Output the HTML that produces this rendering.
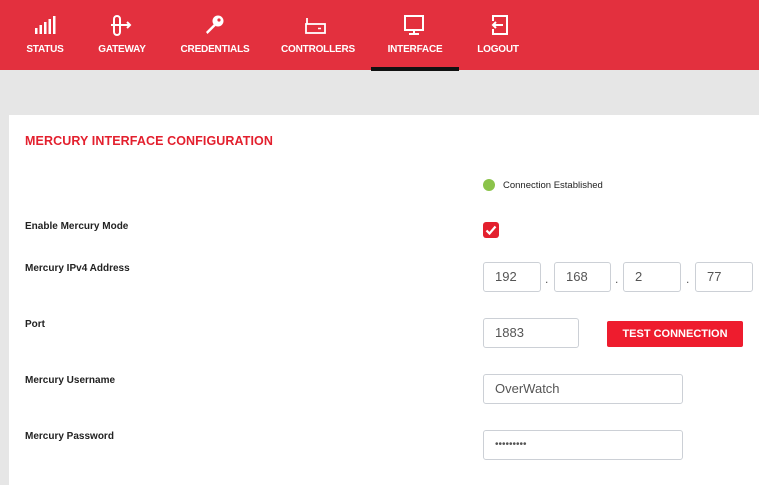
<!DOCTYPE html>
<html><head><style>
*{margin:0;padding:0;box-sizing:border-box}
body{width:759px;height:475px;overflow:hidden;background:#e6e6e6;font-family:"Liberation Sans",sans-serif;position:relative}
.hdr{position:absolute;left:0;top:0;width:759px;height:70px;background:#e3303e}
.nav{position:absolute;top:44px;color:#fff;font-size:10px;font-weight:bold;transform:translateX(-50%);white-space:nowrap;letter-spacing:-0.2px}
.ic{position:absolute;top:14px}
.under{position:absolute;left:371px;top:67px;width:88px;height:4px;background:#111}
.panel{position:absolute;left:9px;top:115px;width:760px;height:370px;background:#fff}
.t{position:absolute;left:25px;top:134px;color:#e3202e;font-size:12.5px;font-weight:bold;letter-spacing:0.1px}
.lb{position:absolute;left:25px;font-size:10px;font-weight:bold;color:#222}
.in{position:absolute;height:30px;border:1px solid #ccd0d6;border-radius:3px;background:#fff;font-size:13px;color:#555;padding-left:11px;line-height:28px}
.dot{position:absolute;font-size:12px;color:#555}
</style></head><body>
<div class="hdr"></div>
<svg class="ic" style="left:34px" width="22" height="22" viewBox="0 0 22 22" fill="#fff"><rect x="1" y="14" width="2.5" height="6"/><rect x="5.5" y="11" width="2.5" height="9"/><rect x="10" y="8" width="2.5" height="12"/><rect x="14.5" y="5" width="2.5" height="15"/><rect x="19" y="2" width="2.5" height="18"/></svg>
<svg class="ic" style="left:110px" width="24" height="22" viewBox="0 0 24 22" fill="none" stroke="#fff" stroke-width="2"><rect x="4" y="2" width="6" height="19" rx="3"/><path d="M1 11h19M17 8l3 3-3 3"/></svg>
<svg class="ic" style="left:203px" width="22" height="22" viewBox="0 0 22 22" fill="#fff"><circle cx="15" cy="7" r="5.5"/><path d="M11 10L3 18l1.5 2 8-8z"/><circle cx="16" cy="6" r="1.6" fill="#e3303e"/></svg>
<svg class="ic" style="left:303px" width="24" height="22" viewBox="0 0 24 22" fill="none" stroke="#fff" stroke-width="1.8"><path d="M4 4v6"/><rect x="3" y="10" width="19" height="9"/><path d="M15 14.5h3" stroke-width="1.5"/></svg>
<svg class="ic" style="left:402px" width="24" height="22" viewBox="0 0 24 22" fill="none" stroke="#fff" stroke-width="2"><rect x="3" y="2" width="18" height="14"/><path d="M12 16v3M7 20h10"/></svg>
<svg class="ic" style="left:487px" width="22" height="22" viewBox="0 0 22 22" fill="none" stroke="#fff" stroke-width="2"><path d="M6 7V2h14v18H6v-5"/><path d="M16 11H6M9 8l-3 3 3 3"/></svg>
<div class="nav" style="left:45px">STATUS</div>
<div class="nav" style="left:122px">GATEWAY</div>
<div class="nav" style="left:215px">CREDENTIALS</div>
<div class="nav" style="left:318px">CONTROLLERS</div>
<div class="nav" style="left:415px">INTERFACE</div>
<div class="nav" style="left:498px">LOGOUT</div>
<div class="under"></div>
<div class="panel"></div>
<div class="t">MERCURY INTERFACE CONFIGURATION</div>
<div style="position:absolute;left:483px;top:179px;width:12px;height:12px;border-radius:50%;background:#8bc34a"></div>
<div style="position:absolute;left:503px;top:180px;font-size:9.5px;color:#222">Connection Established</div>
<div class="lb" style="top:221px">Enable Mercury Mode</div>
<div style="position:absolute;left:483px;top:222px;width:16px;height:16px;border-radius:3px;background:#e3202e"></div>
<svg style="position:absolute;left:483px;top:222px" width="16" height="16" viewBox="0 0 16 16"><path d="M3.5 8.5l3 3 6-7" fill="none" stroke="#fff" stroke-width="2.2"/></svg>
<div class="lb" style="top:263px">Mercury IPv4 Address</div>
<div class="in" style="left:483px;top:262px;width:58px">192</div>
<div class="dot" style="left:545px;top:272px">.</div>
<div class="in" style="left:554px;top:262px;width:57px">168</div>
<div class="dot" style="left:615px;top:272px">.</div>
<div class="in" style="left:623px;top:262px;width:58px">2</div>
<div class="dot" style="left:686px;top:272px">.</div>
<div class="in" style="left:695px;top:262px;width:58px">77</div>
<div class="lb" style="top:319px">Port</div>
<div class="in" style="left:483px;top:318px;width:96px">1883</div>
<div style="position:absolute;left:607px;top:321px;width:136px;height:26px;background:#ee1c2e;border-radius:2px;color:#fff;font-size:11px;font-weight:bold;text-align:center;line-height:26px">TEST CONNECTION</div>
<div class="lb" style="top:375px">Mercury Username</div>
<div class="in" style="left:483px;top:374px;width:200px">OverWatch</div>
<div class="lb" style="top:431px">Mercury Password</div>
<div class="in" style="left:483px;top:430px;width:200px;font-size:10px;letter-spacing:0">•••••••••</div>
</body></html>
